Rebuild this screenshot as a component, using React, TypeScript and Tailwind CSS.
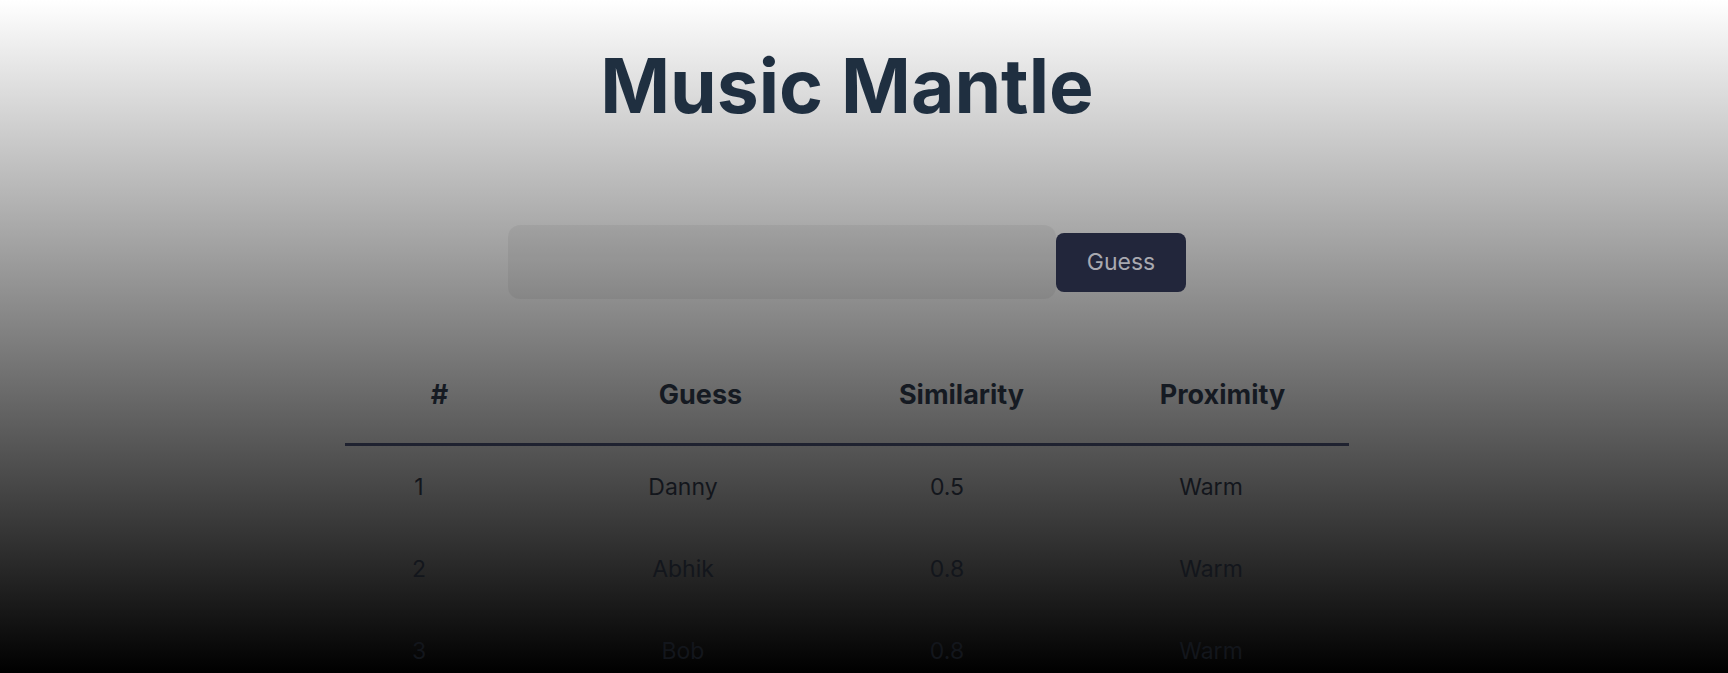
import React from "react";

const rows = [
  { n: 1, guess: "Danny", sim: "0.5", prox: "Warm" },
  { n: 2, guess: "Abhik", sim: "0.8", prox: "Warm" },
  { n: 3, guess: "Bob", sim: "0.8", prox: "Warm" },
];

export default function App() {
  return (
    <div className="h-screen overflow-hidden bg-linear-to-b/srgb from-white to-black font-['Inter',sans-serif]">
      <div className="flex flex-col items-center pr-[34px]">
        <h1 className="mt-[48px] text-[75px] font-bold leading-none text-[#1f2f40]">
          Music Mantle
        </h1>

        <div className="mt-[102px] flex items-center">
          <input
            type="text"
            className="h-[74px] w-[548px] rounded-xl bg-black/5 px-4 outline-none"
          />
          <button className="h-[59px] w-[130px] rounded-lg bg-[#22263b] text-[23px] text-[#a9a9b0]">
            Guess
          </button>
        </div>

        <div className="mt-[78px] w-[1004px]">
          <div className="-ml-[36px] grid w-[1044px] grid-cols-4 pb-[30px] text-center text-[27px] leading-9 font-bold text-[#151a22]">
            <div>#</div>
            <div>Guess</div>
            <div>Similarity</div>
            <div>Proximity</div>
          </div>
          <div className="h-[3px] bg-[#1f2230]" />
          {rows.map((r) => (
            <div
              key={r.n}
              className="-ml-[58px] grid h-[82px] w-[1056px] grid-cols-4 items-center text-center text-[23px] text-[#13161c]"
            >
              <div>{r.n}</div>
              <div>{r.guess}</div>
              <div>{r.sim}</div>
              <div>{r.prox}</div>
            </div>
          ))}
        </div>
      </div>
    </div>
  );
}
